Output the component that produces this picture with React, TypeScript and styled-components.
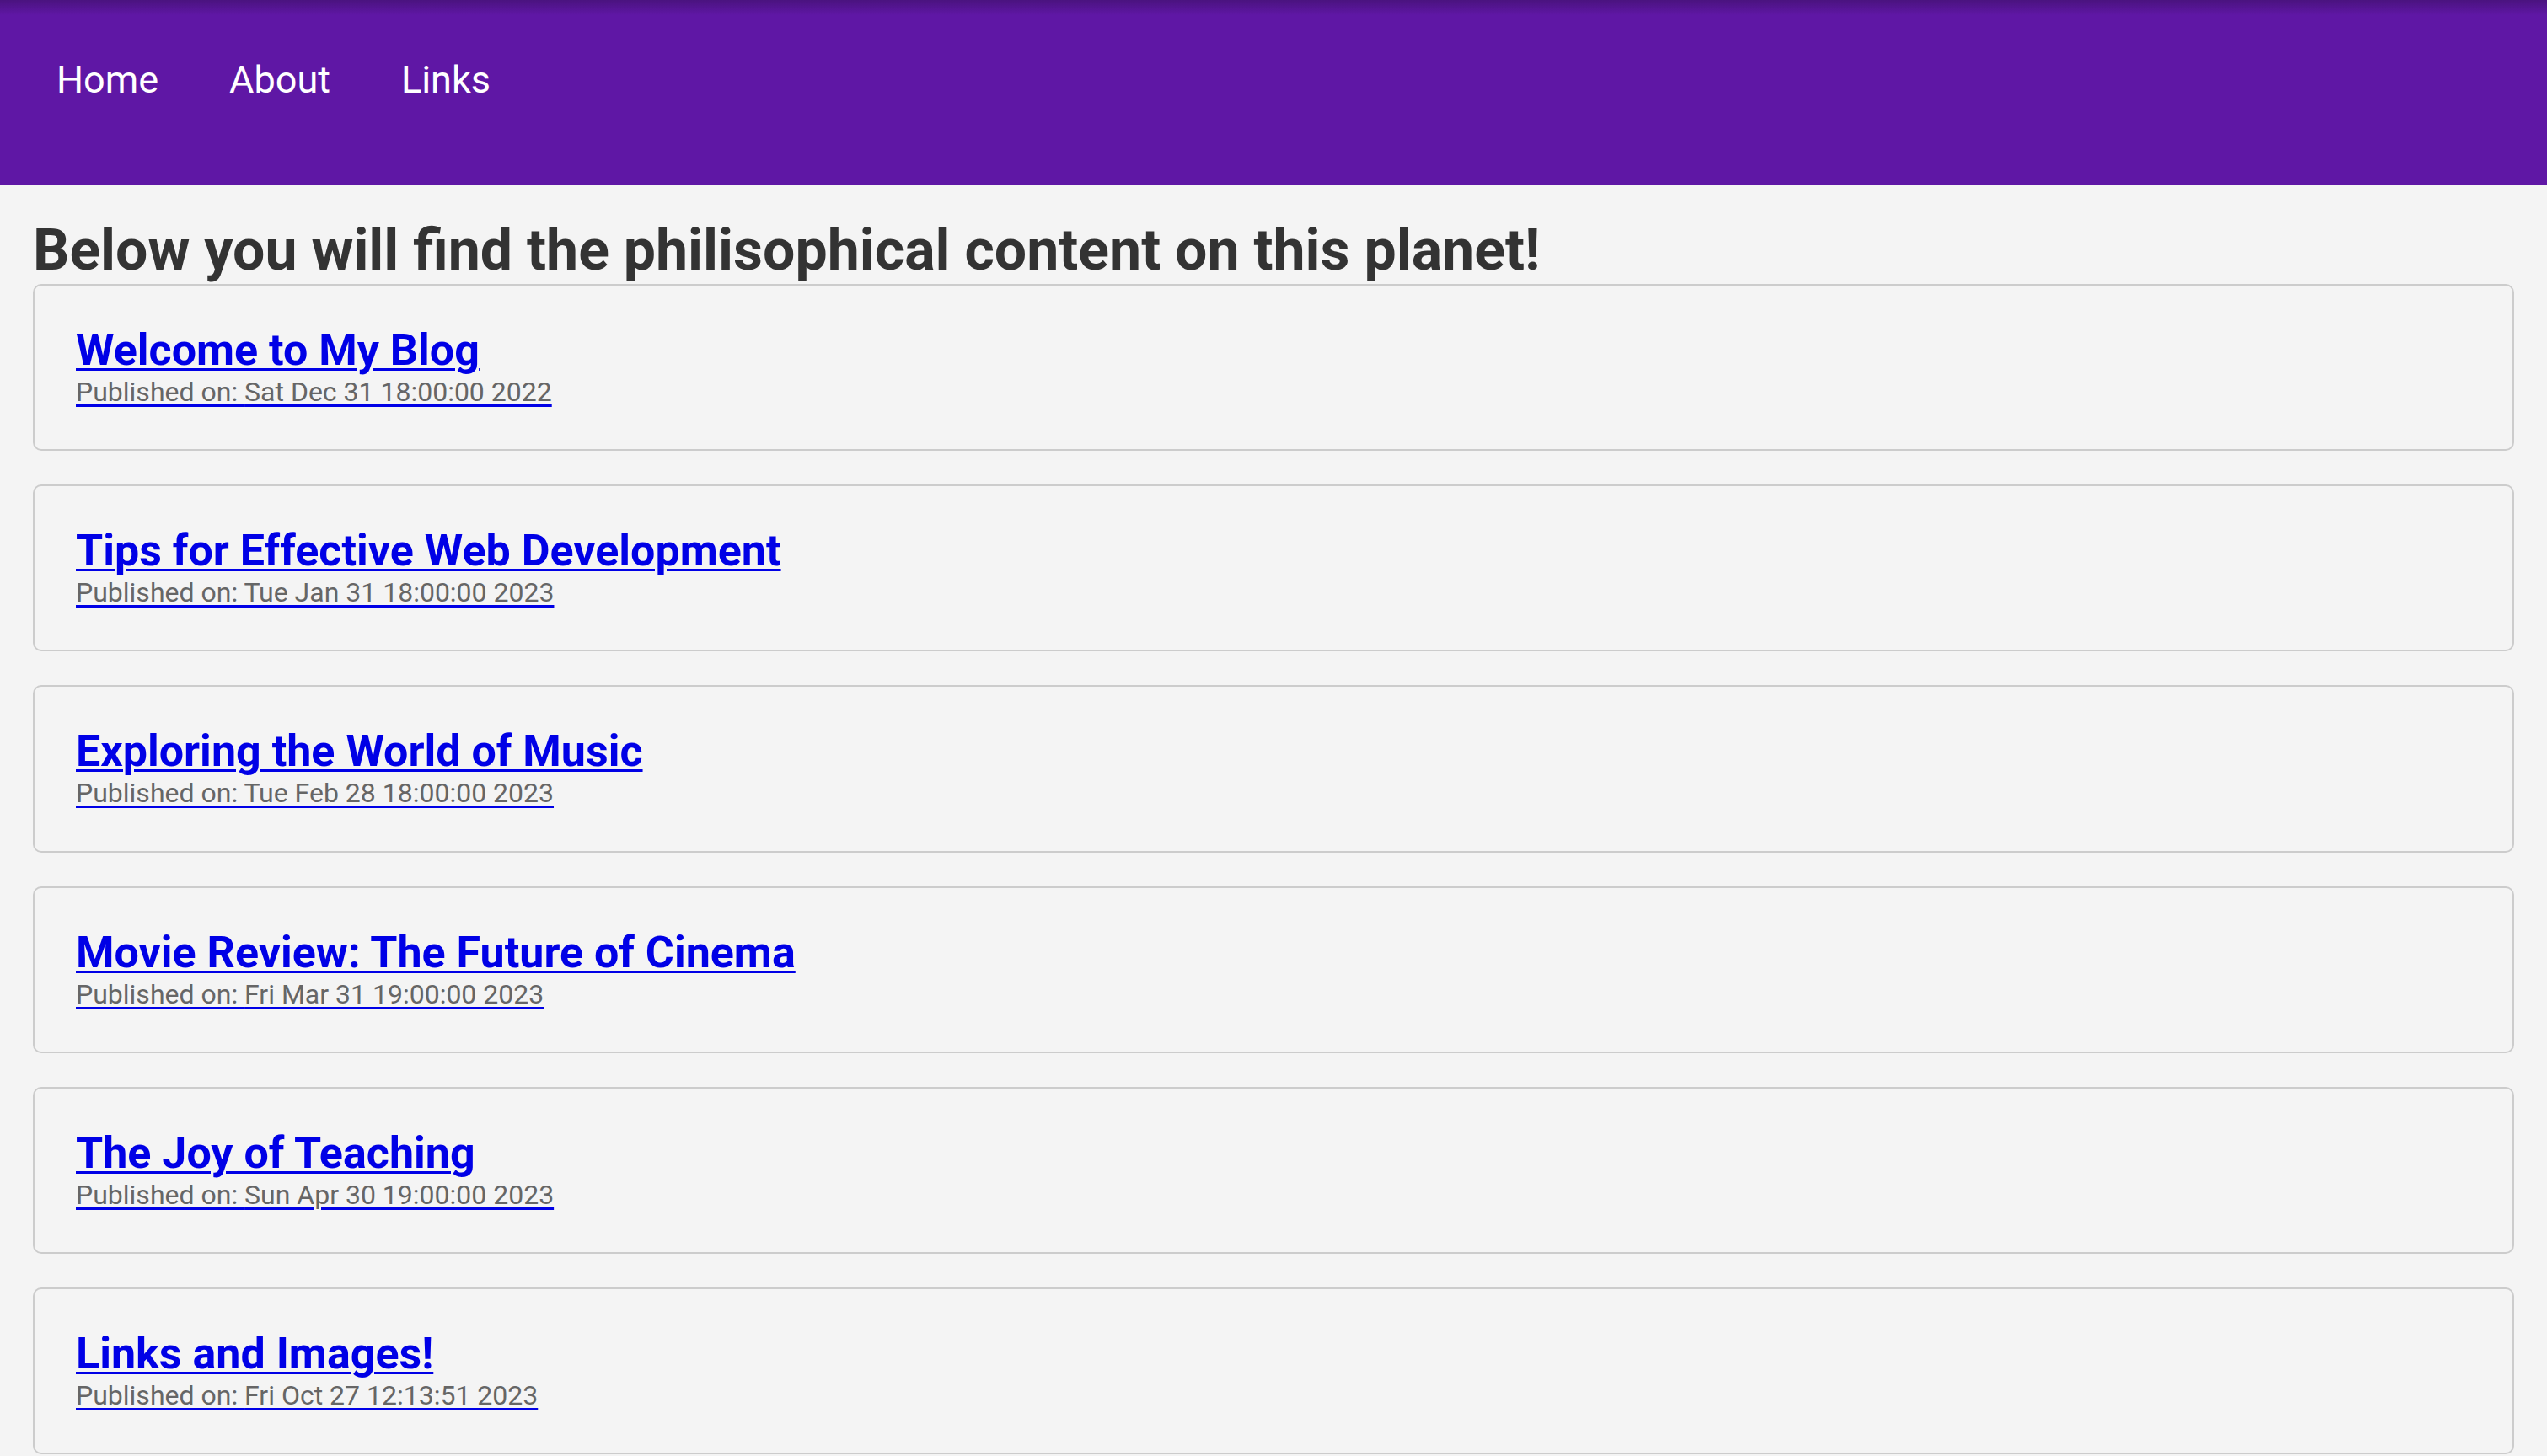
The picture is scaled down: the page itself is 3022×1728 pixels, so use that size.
import React from "react";
import styled, { createGlobalStyle } from "styled-components";

const GlobalStyle = createGlobalStyle`
  html, body {
    margin: 0;
    padding: 0;
    background: #f4f4f4;
    font-family: Roboto, "Liberation Sans", Arial, sans-serif;
  }
`;

const Header = styled.header`
  height: 220px;
  box-sizing: border-box;
  padding: 68px 0 0 67px;
  background: linear-gradient(to bottom, #4a137f 0px, #5f17a5 18px, #5f17a5 100%);
`;

const Nav = styled.nav`
  display: flex;
  gap: 84px;
`;

const NavLink = styled.a`
  color: #ffffff;
  font-size: 45px;
  line-height: normal;
  text-decoration: none;
`;

const Main = styled.main`
  padding: 0 39px 40px;
`;

const Heading = styled.h1`
  margin: 37px 0 0;
  font-size: 68px;
  font-weight: 700;
  line-height: normal;
  color: #333333;
`;

const PostList = styled.div`
  display: flex;
  flex-direction: column;
  gap: 40px;
`;

const Card = styled.div`
  border: 2px solid #cccccc;
  border-radius: 10px;
  padding: 46px 49px 49.2px;
  background: #f4f4f4;
`;

const PostLink = styled.a`
  color: #0000e6;
  text-decoration: underline;
  text-decoration-thickness: 3px;
  text-underline-offset: 4px;
  display: inline-block;
`;

const PostTitle = styled.h2`
  margin: 0;
  font-size: 52px;
  font-weight: 700;
  line-height: normal;
  color: #0000e6;
`;

const PostDate = styled.p`
  margin: 0;
  font-size: 32px;
  line-height: normal;
  color: #666666;
`;

const posts = [
  { title: "Welcome to My Blog", date: "Sat Dec 31 18:00:00 2022" },
  { title: "Tips for Effective Web Development", date: "Tue Jan 31 18:00:00 2023" },
  { title: "Exploring the World of Music", date: "Tue Feb 28 18:00:00 2023" },
  { title: "Movie Review: The Future of Cinema", date: "Fri Mar 31 19:00:00 2023" },
  { title: "The Joy of Teaching", date: "Sun Apr 30 19:00:00 2023" },
  { title: "Links and Images!", date: "Fri Oct 27 12:13:51 2023" },
];

export default function App() {
  return (
    <>
      <GlobalStyle />
      <Header>
        <Nav>
          <NavLink href="#">Home</NavLink>
          <NavLink href="#">About</NavLink>
          <NavLink href="#">Links</NavLink>
        </Nav>
      </Header>
      <Main>
        <Heading>Below you will find the philisophical content on this planet!</Heading>
        <PostList>
          {posts.map((p) => (
            <Card key={p.title}>
              <PostLink href="#">
                <PostTitle>{p.title}</PostTitle>
                <PostDate>Published on: {p.date}</PostDate>
              </PostLink>
            </Card>
          ))}
        </PostList>
      </Main>
    </>
  );
}
